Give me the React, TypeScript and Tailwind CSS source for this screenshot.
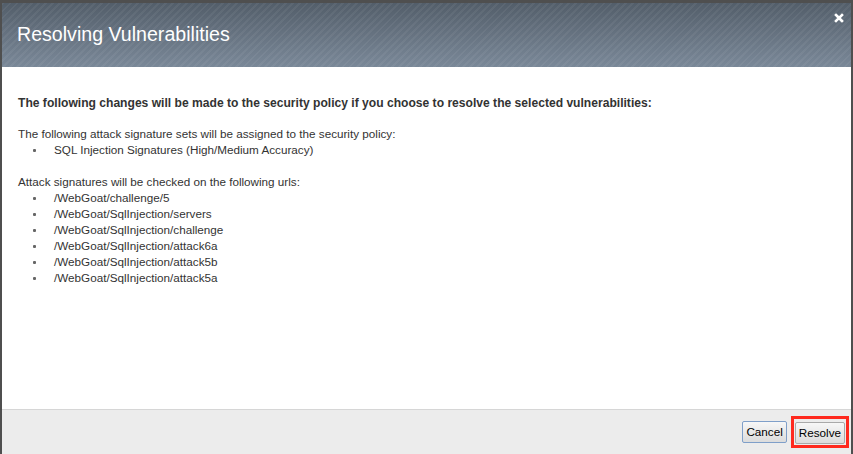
const urls = [
  '/WebGoat/challenge/5',
  '/WebGoat/SqlInjection/servers',
  '/WebGoat/SqlInjection/challenge',
  '/WebGoat/SqlInjection/attack6a',
  '/WebGoat/SqlInjection/attack5b',
  '/WebGoat/SqlInjection/attack5a',
];

function Bullet({ children }: { children: React.ReactNode }) {
  return (
    <li className="flex items-center h-[16px]">
      <span className="ml-[15px] mr-[18px] w-[3px] h-[3px] rounded-[1px] bg-[#666]" />
      <span>{children}</span>
    </li>
  );
}

export default function App() {
  return (
    <div
      className="w-[853px] h-[454px] flex flex-col border-t-[3px] border-l-2 border-r-2 border-[#4f4f4f] bg-white text-[#333] overflow-hidden"
      style={{ fontFamily: '"Liberation Sans", Arial, sans-serif' }}
    >
      {/* header */}
      <div className="h-[64px] shrink-0 flex justify-between pl-[16px] pr-[16px] [background-image:repeating-linear-gradient(135deg,rgba(255,255,255,0.05)_0px,rgba(255,255,255,0.05)_2px,transparent_2px,transparent_5px),linear-gradient(to_bottom,#535e6a,#7a8898)]">
        <h1 className="self-center text-[19.6px] text-white leading-none -mt-[1px] -ml-[1px]">Resolving Vulnerabilities</h1>
        <button className="self-start mt-[10px] -mr-[9px] w-[10px] h-[10px] flex items-center justify-center">
          <svg width="10" height="10" viewBox="0 0 10 10">
            <path d="M2 2L8 8M8 2L2 8" stroke="#fff" strokeWidth="2.6" strokeLinecap="square" />
          </svg>
        </button>
      </div>

      {/* body */}
      <div className="flex-1 px-[16px] pt-[28px] text-[11.7px] leading-[16px]">
        <p className="font-bold text-[12.1px]">
          The following changes will be made to the security policy if you choose to resolve the selected vulnerabilities:
        </p>
        <p className="mt-[15px]">The following attack signature sets will be assigned to the security policy:</p>
        <ul>
          <Bullet>SQL Injection Signatures (High/Medium Accuracy)</Bullet>
        </ul>
        <p className="mt-[16px]">Attack signatures will be checked on the following urls:</p>
        <ul>
          {urls.map((u) => (
            <Bullet key={u}>{u}</Bullet>
          ))}
        </ul>
      </div>

      {/* footer */}
      <div className="h-[45px] shrink-0 border-t border-[#d6d6d6] bg-[#ececec] flex items-center justify-end gap-[4px] pr-[2px]">
        <button className="h-[22px] px-[3px] text-[11.7px] text-black border border-[#7f9fc9] rounded-[2px] bg-gradient-to-b from-[#f7f7f7] to-[#dcdcdc]">
          Cancel
        </button>
        <div className="border-[3px] border-[#ff2a1f] p-[1px]">
          <button className="h-[22px] px-[3px] text-[11.7px] text-black border border-[#a9a9a9] rounded-[2px] bg-gradient-to-b from-[#f7f7f7] to-[#dcdcdc]">
            Resolve
          </button>
        </div>
      </div>
    </div>
  );
}
